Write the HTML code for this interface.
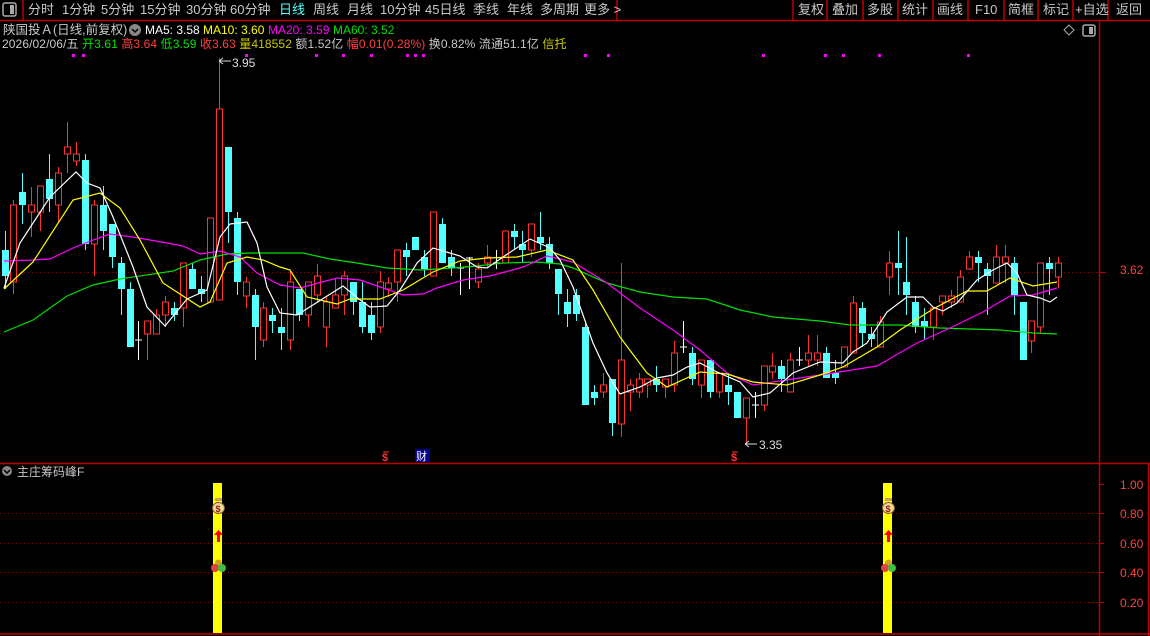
<!DOCTYPE html>
<html><head><meta charset="utf-8">
<style>
*{margin:0;padding:0}
body{width:1150px;height:636px;background:#000;overflow:hidden;position:relative;font-family:"Liberation Sans","Noto Sans CJK SC",sans-serif;color:#c8c8c8}
.t{position:absolute;white-space:nowrap;font-size:13px;line-height:16px}
.s{position:absolute;white-space:nowrap;font-size:12px;line-height:14px}
svg{position:absolute;left:0;top:0}
</style></head><body>
<svg id="g" width="1150" height="636" xmlns="http://www.w3.org/2000/svg">
<g stroke="#c00000" stroke-width="1.5" fill="none">
<line x1="0" y1="20.5" x2="1150" y2="20.5"/>
<line x1="23" y1="0" x2="23" y2="20"/>
<line x1="617" y1="0" x2="617" y2="20"/>
<line x1="793" y1="0" x2="793" y2="20"/><line x1="827" y1="0" x2="827" y2="20"/><line x1="863" y1="0" x2="863" y2="20"/><line x1="898" y1="0" x2="898" y2="20"/><line x1="933" y1="0" x2="933" y2="20"/><line x1="968" y1="0" x2="968" y2="20"/><line x1="1004" y1="0" x2="1004" y2="20"/><line x1="1038" y1="0" x2="1038" y2="20"/><line x1="1073" y1="0" x2="1073" y2="20"/><line x1="1108" y1="0" x2="1108" y2="20"/>
<line x1="1099.5" y1="20" x2="1099.5" y2="636"/>
<line x1="0" y1="463.5" x2="1150" y2="463.5"/>
<line x1="0" y1="634" x2="1150" y2="634"/>
<line x1="1148.5" y1="463" x2="1148.5" y2="636"/>
</g>
<rect x="3" y="3" width="13" height="13" rx="2" fill="none" stroke="#aaa" stroke-width="1.5"/><rect x="10" y="5" width="4" height="9" fill="#aaa"/>
<path d="M1069 25 L1074 30 L1069 35 L1064 30Z" fill="none" stroke="#aaa"/>
<rect x="1083" y="25" width="12" height="11" rx="2" fill="none" stroke="#aaa" stroke-width="1.5"/><rect x="1089" y="27" width="4" height="7" fill="#aaa"/>
<g stroke="#8b0000" stroke-dasharray="1 3" stroke-width="1"><line x1="0" y1="272.5" x2="1099" y2="272.5"/>
<line x1="0" y1="513.5" x2="1099" y2="513.5"/><line x1="0" y1="543.5" x2="1099" y2="543.5"/><line x1="0" y1="572.5" x2="1099" y2="572.5"/><line x1="0" y1="602.5" x2="1099" y2="602.5"/></g>
<g stroke="#c00000"><line x1="1099" y1="272.5" x2="1106" y2="272.5"/><line x1="1099" y1="484.5" x2="1104" y2="484.5"/><line x1="1099" y1="513.5" x2="1104" y2="513.5"/><line x1="1099" y1="543.5" x2="1104" y2="543.5"/><line x1="1099" y1="572.5" x2="1104" y2="572.5"/><line x1="1099" y1="602.5" x2="1104" y2="602.5"/></g>
<g id="cd"></g>
<g fill="none" stroke-width="1.2">
<polyline stroke="#00e000" points="4,332 33,320 67,296 93,285 120,279 173,271 200,260 227,254 250,253 270,253 303,253 330,259 357,263 387,268 420,270 453,268 477,266 503,263 537,262 560,264 573,268 607,283 640,292 673,297 707,299 740,310 773,317 820,321 850,325 900,325 940,328 1000,330 1033,333 1057,334"/>
<polyline stroke="#ff00ff" points="4,261 33,260 50,259 73,248 93,240 110,234 133,237 167,243 183,246 200,254 220,251 240,257 257,273 280,285 300,288 337,278 360,280 380,287 403,295 423,294 437,288 463,280 490,276 523,267 547,256 573,262 607,283 640,308 673,330 700,350 727,373 753,385 773,382 820,375 833,373 877,366 917,343 950,328 983,312 1010,296 1033,295 1057,288"/>
<polyline stroke="#ffff00" points="4,289 33,262 73,200 100,193 120,208 140,240 163,283 200,307 210,302 227,263 247,257 263,260 280,267 290,270 307,297 337,304 350,299 380,299 403,290 433,272 460,261 487,258 517,257 547,250 573,260 593,290 620,337 647,373 667,387 700,372 727,374 753,382 787,385 820,375 843,367 877,347 900,330 933,309 967,291 987,291 1010,278 1033,286 1057,282"/>
<polyline stroke="#ffffff" points="4,288 20,243 50,197 76,172 87,183 100,188 113,217 133,267 147,307 165,326 187,299 207,290 220,237 230,224 247,222 257,243 267,287 280,313 297,315 343,286 360,300 370,307 387,306 400,290 417,263 433,248 460,256 477,267 487,268 503,257 530,239 550,248 560,260 573,287 593,343 607,373 620,394 640,387 657,378 673,375 687,367 700,363 717,372 740,382 753,397 770,393 793,373 820,362 843,363 853,352 867,343 887,312 907,297 923,297 933,307 943,311 957,303 977,280 993,270 1007,263 1017,273 1027,295 1040,298 1050,302 1057,297"/>
</g>
<g fill="#ff00ff"><rect x="72" y="54" width="3" height="3"/><rect x="82" y="54" width="3" height="3"/><rect x="245" y="54" width="3" height="3"/><rect x="315" y="54" width="3" height="3"/><rect x="342" y="54" width="3" height="3"/><rect x="370" y="54" width="3" height="3"/><rect x="406" y="54" width="3" height="3"/><rect x="414" y="54" width="3" height="3"/><rect x="422" y="54" width="3" height="3"/><rect x="584" y="54" width="3" height="3"/><rect x="607" y="54" width="3" height="3"/><rect x="762" y="54" width="3" height="3"/><rect x="824" y="54" width="3" height="3"/><rect x="842" y="54" width="3" height="3"/><rect x="878" y="54" width="3" height="3"/><rect x="967" y="54" width="3" height="3"/></g>
<g stroke="#ddd" fill="none"><path d="M219 61 L231 61 M219 61 L223 58 M219 61 L223 64"/><path d="M745 444 L757 444 M745 444 L749 441 M745 444 L749 447"/></g>
<text x="232" y="67" fill="#ddd" font-size="12" font-family="Liberation Sans">3.95</text>
<text x="759" y="449" fill="#ddd" font-size="12" font-family="Liberation Sans">3.35</text>
<text x="1120" y="274" fill="#ff4040" font-size="12" font-family="Liberation Sans">3.62</text>
<g fill="#ff4040" font-size="12" font-family="Liberation Sans"><text x="1120" y="489">1.00</text><text x="1120" y="518">0.80</text><text x="1120" y="548">0.60</text><text x="1120" y="577">0.40</text><text x="1120" y="607">0.20</text></g>
<text x="382" y="461" fill="#ff3030" font-size="11" font-weight="bold" font-family="Liberation Sans">$</text>
<text x="731" y="461" fill="#ff3030" font-size="11" font-weight="bold" font-family="Liberation Sans">$</text>
<path d="M383 452 L389 452 M732 452 L738 452" stroke="#ff3030"/>
<rect x="415" y="449" width="15" height="13" fill="#00008b"/>
<text x="416" y="460" fill="#fff" font-size="11" font-family="Noto Sans CJK SC">财</text>
<g id="bars"></g>
<circle cx="7" cy="471" r="5" fill="#888"/><path d="M4 470 L7 473 L10 470" stroke="#000" fill="none" stroke-width="1.5"/>
<circle cx="135" cy="30" r="6" fill="#888"/><path d="M132 29 L135 32 L138 29" stroke="#000" fill="none" stroke-width="1.5"/>
</svg>
<div class="t" style="left:28px;top:2px">分时</div>
<div class="t" style="left:62px;top:2px">1分钟</div>
<div class="t" style="left:101px;top:2px">5分钟</div>
<div class="t" style="left:140px;top:2px">15分钟</div>
<div class="t" style="left:186px;top:2px">30分钟</div>
<div class="t" style="left:230px;top:2px">60分钟</div>
<div class="t" style="left:279px;top:2px;color:#54ffff">日线</div>
<div class="t" style="left:313px;top:2px">周线</div>
<div class="t" style="left:347px;top:2px">月线</div>
<div class="t" style="left:380px;top:2px">10分钟</div>
<div class="t" style="left:425px;top:2px">45日线</div>
<div class="t" style="left:473px;top:2px">季线</div>
<div class="t" style="left:507px;top:2px">年线</div>
<div class="t" style="left:540px;top:2px">多周期</div>
<div class="t" style="left:584px;top:2px">更多 &gt;</div>
<div class="t" style="left:798px;top:2px">复权</div>
<div class="t" style="left:832px;top:2px">叠加</div>
<div class="t" style="left:867px;top:2px">多股</div>
<div class="t" style="left:902px;top:2px">统计</div>
<div class="t" style="left:937px;top:2px">画线</div>
<div class="t" style="left:975px;top:2px">F10</div>
<div class="t" style="left:1008px;top:2px">简框</div>
<div class="t" style="left:1043px;top:2px">标记</div>
<div class="t" style="left:1075px;top:2px">+自选</div>
<div class="t" style="left:1116px;top:2px">返回</div>
<div class="t" style="left:3px;top:22px;font-size:12.5px">陕国投Ａ(日线,前复权)</div>
<div class="s" style="left:145px;top:23px;color:#fff">MA5: 3.58</div>
<div class="s" style="left:203px;top:23px;color:#ffff00">MA10: 3.60</div>
<div class="s" style="left:268px;top:23px;color:#ff00ff">MA20: 3.59</div>
<div class="s" style="left:333px;top:23px;color:#00e000">MA60: 3.52</div>
<div class="s" style="left:2px;top:37px;letter-spacing:0.1px">2026/02/06/五 <span style="color:#00e000">开3.61</span> <span style="color:#ff4040">高3.64</span> <span style="color:#00e000">低3.59</span> <span style="color:#ff4040">收3.63</span> <span style="color:#c8c800">量418552</span> 额1.52亿 <span style="color:#ff4040">幅0.01(0.28%)</span> 换0.82% 流通51.1亿 <span style="color:#c8c800">信托</span></div>
<div class="s" style="left:17px;top:465px">主庄筹码峰F</div>
<script>
var D=`c 250 276 231 289
r 205 282 200 294
c 192 205 173 224
r 205 212 187 237
r 186 212 186 231
c 179 199 154 212
r 173 205 167 223
r 147 154 122 173
r 154 161 142 166
c 160 244 154 250
r 205 244 200 276
c 205 231 186 250
c 224 257 224 268
c 263 289 257 315
c 289 347 282 347
w 340 340 321 360
r 321 334 321 360
r 315 334 309 334
r 302 315 296 327
c 308 315 302 321
r 263 308 263 327
c 269 289 263 289
c 289 294 276 302
r 218 302 218 302
r 109 300 58 300
c 147 212 147 243
c 218 282 212 295
r 282 296 277 308
c 295 327 289 360
r 308 340 302 347
c 315 321 308 333
c 327 333 308 350
r 282 340 271 350
c 289 315 289 321
r 282 315 282 327
r 276 295 264 303
r 302 327 296 347
r 295 308 279 308
r 276 295 271 315
c 282 302 282 315
c 302 327 282 333
c 315 333 302 340
r 282 327 271 333
r 283 289 277 297
r 250 282 250 302
c 250 257 243 276
c 237 250 237 250
c 257 269 250 276
r 212 276 212 276
c 224 263 218 263
c 257 268 250 276
w 268 268 263 295
w 258 258 257 289
r 269 282 263 288
r 257 263 245 268
w 263 263 250 269
r 231 263 231 263
c 231 237 224 250
c 244 250 231 263
r 224 250 224 257
c 237 243 212 250
c 244 263 237 269
c 269 294 269 315
c 302 314 289 327
c 295 314 289 321
c 327 405 321 405
c 392 398 385 405
r 385 392 373 398
c 379 423 379 436
r 360 424 263 437
r 385 392 379 411
r 379 392 373 398
r 379 385 379 398
c 379 385 366 392
r 379 387 379 398
r 353 385 341 392
w 347 347 321 353
c 353 379 347 385
r 360 385 360 398
c 360 392 360 398
r 373 392 373 398
c 385 392 373 405
c 392 418 392 418
r 398 418 398 443
w 405 405 392 418
r 366 405 366 411
r 366 372 353 379
c 366 379 360 392
r 360 392 353 392
w 360 360 347 366
r 353 360 335 366
r 353 360 335 366
c 353 378 347 378
c 373 378 360 384
r 347 367 347 367
r 303 353 296 353
c 308 333 302 347
c 334 339 327 347
r 322 347 316 347
r 263 277 251 295
c 263 268 231 295
c 282 295 237 315
c 302 327 296 333
c 321 327 308 340
r 308 327 308 340
r 296 302 296 315
r 296 302 290 308
r 277 302 270 302
r 257 269 251 270
c 257 263 251 282
c 269 276 263 315
r 257 283 245 283
r 257 263 245 283
c 263 295 257 315
c 302 360 302 360
r 321 341 321 353
r 263 327 263 333
c 263 269 257 295
r 263 277 257 288`.split("\n");
var h="";
D.forEach(function(l,i){var p=l.trim().split(" ");var t=p[0],a=+p[1],b=+p[2],wt=+p[3],wb=+p[4];var x=Math.round(4.5+8.93*i)+0.5;
var col=t=="r"?"#ff3232":t=="c"?"#54ffff":"#ffffff";
h+='<line x1="'+x+'" y1="'+wt+'" x2="'+x+'" y2="'+wb+'" stroke="'+col+'"/>';
if(t=="w"){h+='<line x1="'+(x-3.5)+'" y1="'+a+'" x2="'+(x+3.5)+'" y2="'+a+'" stroke="#fff"/>';}
else if(t=="r"){h+='<rect x="'+(x-3)+'" y="'+a+'" width="6" height="'+Math.max(b-a,1)+'" fill="#000" stroke="'+col+'"/>';}
else{h+='<rect x="'+(x-3.5)+'" y="'+a+'" width="7" height="'+Math.max(b-a,1)+'" fill="'+col+'"/>';}
});
document.getElementById("cd").innerHTML=h;
var b="";[[213,218],[883,888]].forEach(function(q){var x=q[0],c=q[1];
b+='<rect x="'+x+'" y="483" width="9" height="150" fill="#ffff00"/>';
b+='<ellipse cx="'+(c+0.5)+'" cy="508" rx="6" ry="5.5" fill="#f0d890" stroke="#8b5a2b"/><rect x="'+(c-3)+'" y="498" width="7" height="3" fill="#c8a060"/><text x="'+(c-2.5)+'" y="512" font-size="9" fill="#8b2020" font-weight="bold">$</text>';
b+='<path d="M'+(c+0.5)+' 530 L'+(c+5)+' 535 L'+(c+2)+' 535 L'+(c+2)+' 542 L'+(c-1)+' 542 L'+(c-1)+' 535 L'+(c-4)+' 535Z" fill="#ff0000"/>';
b+='<circle cx="'+(c+0.5)+'" cy="563" r="3.5" fill="#d0a020"/><circle cx="'+(c-3)+'" cy="568" r="4" fill="#e04040"/><circle cx="'+(c+4)+'" cy="568" r="4" fill="#40c040"/>';
});
document.getElementById("bars").innerHTML=b;
</script>
</body></html>
